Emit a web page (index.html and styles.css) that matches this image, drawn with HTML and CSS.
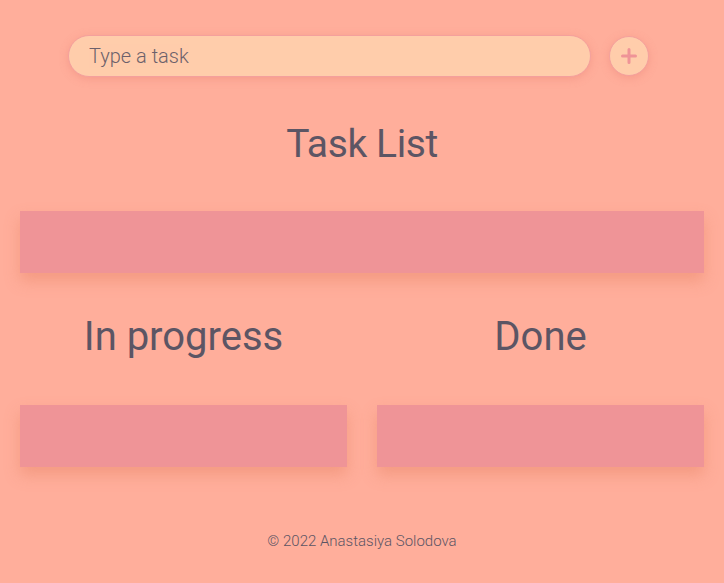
FILE: index.html
```html
<!DOCTYPE html>
<html lang="en">
<head>
<meta charset="utf-8">
<title>Task List</title>
<link rel="stylesheet" href="styles.css">
</head>
<body>
<form class="add-form">
  <input class="task-input" type="text" placeholder="Type a task">
  <button class="add-btn" type="button" aria-label="Add">
    <svg width="20" height="20" viewBox="0 0 20 20"><path d="M10 3.5v13M3.5 10h13" stroke="#ef9497" stroke-width="3" stroke-linecap="round" fill="none"/></svg>
  </button>
</form>
<h1 class="title">Task List</h1>
<div class="list-box"></div>
<div class="columns">
  <section class="column">
    <h2 class="col-title">In progress</h2>
    <div class="list-box"></div>
  </section>
  <section class="column">
    <h2 class="col-title">Done</h2>
    <div class="list-box"></div>
  </section>
</div>
<footer class="footer">© 2022 Anastasiya Solodova</footer>
</body>
</html>
```
FILE: styles.css
```css
html, body { margin: 0; padding: 0; }
body {
  background: #ffae9b;
  font-family: Roboto, "Liberation Sans", sans-serif;
  color: #5c5564;
  padding: 0 20px;
  min-height: 583px;
  box-sizing: border-box;
}
.add-form {
  display: flex;
  align-items: center;
  gap: 18px;
  padding-top: 35px;
  padding-left: 48px;
}
.task-input {
  width: 523px;
  height: 42px;
  box-sizing: border-box;
  border: 1px solid #f4a09d;
  border-radius: 21px;
  background: #ffcdab;
  padding: 0 20px;
  font-family: inherit;
  font-size: 20px;
  font-weight: 300;
  color: #5c5564;
  outline: none;
  box-shadow: 0 2px 8px rgba(230, 120, 110, 0.35);
}
.task-input::placeholder { color: #5c5564; opacity: 0.9; }
.add-btn {
  width: 40px;
  height: 40px;
  border-radius: 50%;
  border: 1px solid #f4a09d;
  background: #ffcdab;
  padding: 0;
  display: flex;
  align-items: center;
  justify-content: center;
  box-shadow: 0 2px 8px rgba(230, 120, 110, 0.35);
}
.title {
  margin: 43px 0 43px;
  text-align: center;
  font-weight: 400;
  font-size: 39px;
  letter-spacing: -0.4px;
  line-height: 48px;
}
.list-box {
  height: 62px;
  background: #ef9497;
  box-shadow: 0 8px 14px rgba(230, 130, 100, 0.45);
}
.columns {
  display: grid;
  grid-template-columns: 1fr 1fr;
  column-gap: 30px;
  margin-top: 40px;
}
.col-title {
  margin: 0 0 44px;
  text-align: center;
  font-weight: 400;
  font-size: 40px;
  line-height: 48px;
}
.footer {
  margin-top: 64px;
  text-align: center;
  font-size: 15px;
  line-height: 20px;
  font-weight: 300;
}
```
